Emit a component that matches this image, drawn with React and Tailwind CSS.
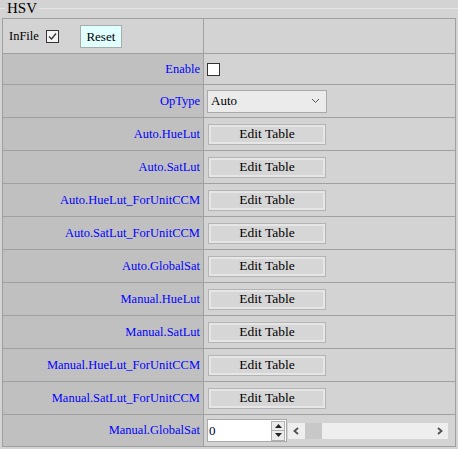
const ROWS = [
  'Auto.HueLut',
  'Auto.SatLut',
  'Auto.HueLut_ForUnitCCM',
  'Auto.SatLut_ForUnitCCM',
  'Auto.GlobalSat',
  'Manual.HueLut',
  'Manual.SatLut',
  'Manual.HueLut_ForUnitCCM',
  'Manual.SatLut_ForUnitCCM',
]

function Label({ children }) {
  return (
    <div className="w-[201px] h-full shrink-0 bg-[#c0c0c0] border-r border-[#a0a0a0] flex items-center justify-end pr-[3px] text-[12.5px] text-[#0000ff]">
      {children}
    </div>
  )
}

function EditTable() {
  return (
    <button className="ml-[4px] w-[118px] h-[21px] border border-[#b4b4b4] bg-[#d6d6d6] shadow-[inset_0_0_0_2px_#e6e6e6] text-[13.5px] leading-none text-black font-['Liberation_Serif','Times_New_Roman',serif]">
      Edit Table
    </button>
  )
}

export default function App() {
  return (
    <div className="w-[458px] h-[449px] bg-[#d3d3d3] overflow-hidden text-black font-['Liberation_Serif','Times_New_Roman',serif]">
      <fieldset className="border-t border-[#e6e6e6]">
        <legend className="ml-[5px] px-[2px] text-[15px] leading-[16px]">HSV</legend>
        <div className="ml-[2px] mt-[2px] w-[454px] border border-[#a0a0a0]">
          <div className="flex h-[35px] border-b border-[#a0a0a0]">
            <div className="w-[201px] h-full shrink-0 border-r border-[#a0a0a0] flex items-center pl-[6px] text-[12.5px]">
              <span>InFile</span>
              <span className="ml-[7px] w-[13px] h-[13px] border border-[#333] bg-[#f4f4f4] flex items-center justify-center">
                <svg width="11" height="11" viewBox="0 0 11 11">
                  <path d="M2 5.5 L4.5 8 L9 2.5" fill="none" stroke="#333" strokeWidth="1.3" />
                </svg>
              </span>
              <button className="ml-[21px] w-[42px] h-[23px] border border-[#aaaaaa] bg-[#e0ffff] text-[13px] leading-none font-['Liberation_Serif','Times_New_Roman',serif]">
                Reset
              </button>
            </div>
            <div className="flex-1" />
          </div>

          <div className="flex h-[31px] border-b border-[#a0a0a0]">
            <Label>Enable</Label>
            <div className="flex-1 flex items-center pl-[3px]">
              <span className="w-[13px] h-[13px] border border-[#333] bg-white" />
            </div>
          </div>

          <div className="flex h-[33px] border-b border-[#a0a0a0]">
            <Label>OpType</Label>
            <div className="flex-1 flex items-center pl-[3px]">
              <div className="w-[120px] h-[23px] border border-[#a9a9a9] bg-[#ebebeb] flex items-center justify-between pl-[3px] pr-[6px] text-[13px]">
                <span>Auto</span>
                <svg width="9" height="6" viewBox="0 0 9 6">
                  <path d="M1 1 L4.5 4.5 L8 1" fill="none" stroke="#555" strokeWidth="1" />
                </svg>
              </div>
            </div>
          </div>

          {ROWS.map((r) => (
            <div key={r} className="flex h-[33px] border-b border-[#a0a0a0]">
              <Label>{r}</Label>
              <div className="flex-1 flex items-center">
                <EditTable />
              </div>
            </div>
          ))}

          <div className="flex h-[31px]">
            <Label>Manual.GlobalSat</Label>
            <div className="flex-1 flex items-center pl-[3px]">
              <div className="w-[80px] h-[23px] border border-[#a9a9a9] bg-white flex items-center justify-between pl-[1px] pr-[1px]">
                <span className="text-[13px] text-[#000033]">0</span>
                <div className="flex flex-col w-[14px] h-[20px] border border-[#b0b0b0] bg-[#ececec]">
                  <div className="flex-1 flex items-center justify-center border-b border-[#b0b0b0]">
                    <svg width="7" height="4" viewBox="0 0 7 4"><path d="M0 4 L3.5 0 L7 4 Z" fill="#222" /></svg>
                  </div>
                  <div className="flex-1 flex items-center justify-center">
                    <svg width="7" height="4" viewBox="0 0 7 4"><path d="M0 0 L3.5 4 L7 0 Z" fill="#222" /></svg>
                  </div>
                </div>
              </div>
              <div className="ml-[1px] w-[160px] h-[16px] bg-[#eeeeee] flex items-center">
                <svg className="ml-[5px]" width="6" height="8" viewBox="0 0 6 8">
                  <path d="M5 1 L1.5 4 L5 7" fill="none" stroke="#505050" strokeWidth="1.8" />
                </svg>
                <div className="ml-[6px] w-[17px] h-full bg-[#c8c8c8]" />
                <div className="flex-1" />
                <svg className="mr-[5px]" width="6" height="8" viewBox="0 0 6 8">
                  <path d="M1 1 L4.5 4 L1 7" fill="none" stroke="#505050" strokeWidth="1.8" />
                </svg>
              </div>
            </div>
          </div>
        </div>
      </fieldset>
    </div>
  )
}
